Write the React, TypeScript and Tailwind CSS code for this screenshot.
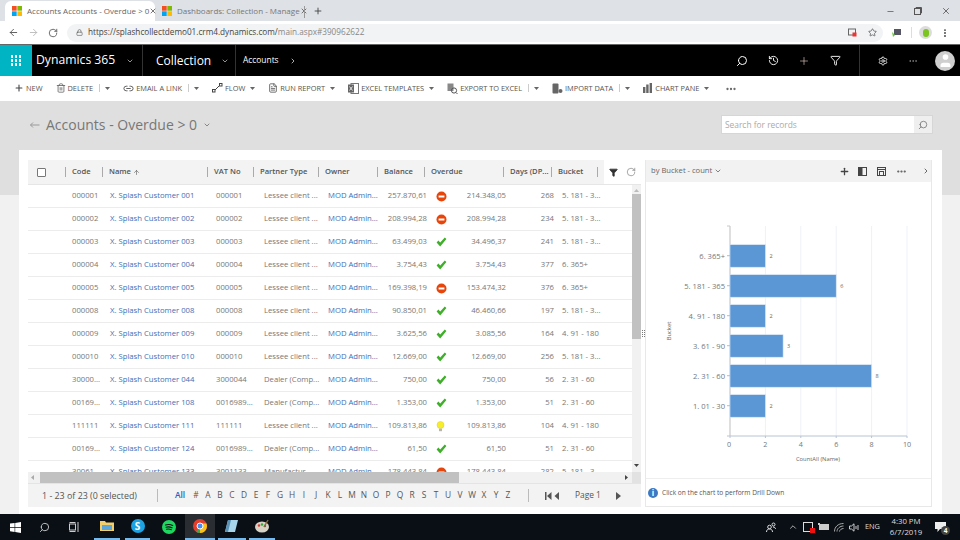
import React from 'react';
import {
  ArrowLeft, ArrowRight, RotateCw, Lock, Star, X, Plus, Minus, MoreVertical, ChevronDown, ChevronRight,
  Search, History, Filter, Settings, Trash2, Link2, FileText, MoreHorizontal, ArrowUp, User,
} from 'lucide-react';

const FONT = "font-['Open_Sans','Liberation_Sans',sans-serif]";

const MsLogo = () => (
  <svg width="10" height="10" viewBox="0 0 12 12" className="shrink-0">
    <rect x="0" y="0" width="5.6" height="5.6" fill="#f25022" />
    <rect x="6.4" y="0" width="5.6" height="5.6" fill="#7fba00" />
    <rect x="0" y="6.4" width="5.6" height="5.6" fill="#00a4ef" />
    <rect x="6.4" y="6.4" width="5.6" height="5.6" fill="#ffb900" />
  </svg>
);

const Caret = () => (
  <svg width="5" height="3" viewBox="0 0 5 3" className="ml-[5px]"><path d="M0 0h5L2.5 3z" fill="#666" /></svg>
);

const Sep = () => <span className="ml-[6px] h-[8px] w-px bg-[#ccc]" />;

const StopIcon = () => (
  <svg width="11" height="11" viewBox="0 0 11 11">
    <circle cx="5.5" cy="5.5" r="5" fill="#e8450a" />
    <rect x="2.6" y="4.5" width="5.8" height="2" fill="#fff" />
  </svg>
);
const CheckIcon = () => (
  <svg width="11" height="10" viewBox="0 0 11 10">
    <path d="M0.6 5.4 2.4 3.6 4.2 5.6 8.8 0.6 10.4 2 4.2 9.4z" fill="#3fae29" />
  </svg>
);
const BulbIcon = () => (
  <svg width="9" height="11" viewBox="0 0 9 11">
    <circle cx="4.5" cy="4" r="3.5" fill="#f7ee2a" stroke="#e0c830" strokeWidth="0.5" />
    <rect x="3" y="7.6" width="3" height="2.6" fill="#b5b5b5" />
  </svg>
);

type Row = [string, string, string, string, string, 'stop' | 'check' | 'bulb', string, string, string];

const rows: Row[] = [
  ['000001', '001', '000001', 'Lessee client ...', '257.870,61', 'stop', '214.348,05', '268', '5. 181 - 3...'],
  ['000002', '002', '000002', 'Lessee client ...', '208.994,28', 'stop', '208.994,28', '234', '5. 181 - 3...'],
  ['000003', '003', '000003', 'Lessee client ...', '63.499,03', 'check', '34.496,37', '241', '5. 181 - 3...'],
  ['000004', '004', '000004', 'Lessee client ...', '3.754,43', 'check', '3.754,43', '377', '6. 365+'],
  ['000005', '005', '000005', 'Lessee client ...', '169.398,19', 'stop', '153.474,32', '376', '6. 365+'],
  ['000008', '008', '000008', 'Lessee client ...', '90.850,01', 'check', '46.460,66', '197', '5. 181 - 3...'],
  ['000009', '009', '000009', 'Lessee client ...', '3.625,56', 'check', '3.085,56', '164', '4. 91 - 180'],
  ['000010', '010', '000010', 'Lessee client ...', '12.669,00', 'check', '12.669,00', '256', '5. 181 - 3...'],
  ['30000...', '044', '3000044', 'Dealer (Comp...', '750,00', 'check', '750,00', '56', '2. 31 - 60'],
  ['00169...', '108', '0016989...', 'Dealer (Comp...', '1.353,00', 'check', '1.353,00', '51', '2. 31 - 60'],
  ['111111', '111', '111111', 'Lessee client ...', '109.813,86', 'bulb', '109.813,86', '104', '4. 91 - 180'],
  ['00169...', '124', '0016989...', 'Dealer (Comp...', '61,50', 'check', '61,50', '51', '2. 31 - 60'],
  ['30061...', '133', '3001133', 'Manufactur...', '178.443,84', 'stop', '178.443,84', '282', '5. 181 - 3...'],
];

const headCols = 'grid grid-cols-[37px_37px_105px_46px_65px_59px_47px_79px_48px_46px_1fr] items-center';
const rowCols = 'grid grid-cols-[37px_37px_105px_46px_65px_59px_50px_20px_59px_48px_1fr] items-center';

const headers = ['Code', 'Name', 'VAT No', 'Partner Type', 'Owner', 'Balance', 'Overdue', 'Days (DP...', 'Bucket'];

const menu: { icon: React.ReactNode; label: string; after?: 'split' | 'caret' }[] = [
  { icon: <Plus size={10} strokeWidth={2.6} className="text-[#444]" />, label: 'NEW' },
  { icon: <Trash2 size={10} className="text-[#666]" />, label: 'DELETE', after: 'split' },
  { icon: <Link2 size={11} className="text-[#555]" />, label: 'EMAIL A LINK', after: 'split' },
  {
    icon: (
      <svg width="11" height="10" viewBox="0 0 11 10" fill="none" stroke="#444">
        <rect x="0.5" y="6.5" width="2.5" height="2.5" /><rect x="7.5" y="0.5" width="2.5" height="2.5" /><path d="M3 7 7.5 2.5" />
      </svg>
    ),
    label: 'FLOW',
    after: 'caret',
  },
  { icon: <FileText size={10} className="text-[#555]" />, label: 'RUN REPORT', after: 'caret' },
  {
    icon: (
      <svg width="11" height="11" viewBox="0 0 11 11">
        <rect x="3" y="0.5" width="7.5" height="10" fill="none" stroke="#777" />
        <rect x="0" y="1.5" width="6" height="8" fill="#666" />
        <path d="M1.5 3.5 4.5 7.5M4.5 3.5 1.5 7.5" stroke="#fff" strokeWidth="0.8" />
      </svg>
    ),
    label: 'EXCEL TEMPLATES',
    after: 'caret',
  },
  {
    icon: (
      <svg width="11" height="11" viewBox="0 0 11 11">
        <rect x="0.5" y="0.5" width="6" height="7.5" fill="#888" />
        <circle cx="7" cy="7.5" r="2.6" fill="none" stroke="#555" /><path d="M9 9.5 10.5 11" stroke="#555" />
      </svg>
    ),
    label: 'EXPORT TO EXCEL',
    after: 'split',
  },
  {
    icon: (
      <svg width="11" height="11" viewBox="0 0 11 11">
        <rect x="0.5" y="0.5" width="6" height="10" rx="1" fill="#666" />
        <circle cx="8.5" cy="8" r="2" fill="#666" />
      </svg>
    ),
    label: 'IMPORT DATA',
    after: 'split',
  },
  {
    icon: (
      <svg width="10" height="10" viewBox="0 0 10 10" fill="#666">
        <rect x="0" y="4" width="2.4" height="6" /><rect x="3.2" y="1.5" width="2.4" height="8.5" /><rect x="6.6" y="0" width="2.4" height="10" />
      </svg>
    ),
    label: 'CHART PANE',
    after: 'caret',
  },
];

const bars: [string, number][] = [
  ['6. 365+', 2],
  ['5. 181 - 365', 6],
  ['4. 91 - 180', 2],
  ['3. 61 - 90', 3],
  ['2. 31 - 60', 8],
  ['1. 01 - 30', 2],
];

// x/y numbers are relative to the chart pane svg (origin at page 646,183)
const Chart = () => {
  const x0 = 84;
  const unit = 17.7;
  const axisY = 254;
  return (
    <svg width="285" height="296" viewBox="0 0 285 296" className={FONT}>
      {[2, 4, 6, 8, 10].map((v) => (
        <line key={v} x1={x0 + v * unit} x2={x0 + v * unit} y1={44} y2={axisY} stroke="#eef1f6" />
      ))}
      <line x1={x0} x2={x0} y1={44} y2={axisY} stroke="#c9c9c9" strokeWidth="1.2" />
      <line x1={x0 - 3} x2={x0} y1={44} y2={44} stroke="#c9c9c9" />
      <line x1={x0 - 3} x2={x0 + 177} y1={axisY} y2={axisY} stroke="#b8c4d4" />
      {bars.map(([label, v], i) => {
        const y = 62.7 + i * 30;
        return (
          <g key={label}>
            <rect x={x0} y={y} width={v * unit} height={22.5} fill="#5b96d5" stroke="#dbe7f4" strokeWidth="0.6" />
            <line x1={x0 - 3} x2={x0} y1={y + 11} y2={y + 11} stroke="#bbb" />
            <text x={x0 - 5} y={y + 14} textAnchor="end" fontSize="7.6" fill="#777">{label}</text>
            <text x={x0 + v * unit + 4} y={y + 13.5} fontSize="5.5" fill="#666">{v}</text>
          </g>
        );
      })}
      {[0, 2, 4, 6, 8, 10].map((v) => (
        <g key={v}>
          <line x1={x0 + v * unit} x2={x0 + v * unit} y1={axisY} y2={axisY + 2} stroke="#b8c4d4" />
          <text x={x0 + v * unit - (v === 0 ? 1 : 0)} y={axisY + 11} textAnchor="middle" fontSize="7.2" fill="#777">{v}</text>
        </g>
      ))}
      <text x={x0 + 88} y={axisY + 25} textAnchor="middle" fontSize="5.8" fill="#666">CountAll (Name)</text>
      <text transform="rotate(-90 25 149)" x={25} y={149} textAnchor="middle" fontSize="5.8" fill="#666">Bucket</text>
    </svg>
  );
};

const StatusIcon = ({ kind }: { kind: Row[5] }) => {
  if (kind === 'stop') return <StopIcon />;
  if (kind === 'bulb') return <BulbIcon />;
  return <CheckIcon />;
};

export default function App() {
  return (
    <div className={`flex h-[540px] w-[960px] flex-col overflow-hidden bg-white ${FONT}`}>
      {/* browser tabs */}
      <div className="flex h-[21px] shrink-0 items-end bg-[#dee1e6] pl-[5px]">
        <div className="flex h-[20px] w-[150px] items-center rounded-t-[6px] bg-white pl-[7px] pr-[7px]">
          <MsLogo />
          <span className="ml-[5px] flex-1 whitespace-nowrap text-[8px] text-[#666]">Accounts Accounts - Overdue &gt; 0</span>
          <X size={8} strokeWidth={2.4} className="shrink-0 text-[#555]" />
        </div>
        <div className="flex h-[20px] w-[149px] items-center pl-[7px] pr-[6px]">
          <MsLogo />
          <span className="ml-[5px] flex-1 whitespace-nowrap text-[8px] text-[#777]">Dashboards: Collection - Manage</span>
          <X size={8} strokeWidth={2.4} className="shrink-0 text-[#555]" />
        </div>
        <span className="mb-[3px] h-[12px] w-px bg-[#999]" />
        <Plus size={10} strokeWidth={2.2} className="mb-[5px] ml-[8px] text-[#444]" />
        <div className="mb-[5px] ml-auto flex items-center gap-[19px] pr-[9px] text-[#555]">
          <Minus size={9} />
          <svg width="8" height="8" viewBox="0 0 8 8" fill="none" stroke="#555"><rect x="0.5" y="1.5" width="6" height="6" /><path d="M2 1.5V.5h5.5V6h-1" /></svg>
          <X size={10} />
        </div>
      </div>

      {/* address bar */}
      <div className="flex h-[23px] shrink-0 items-center bg-white pl-[8px]">
        <ArrowLeft size={11} className="text-[#555]" />
        <ArrowRight size={11} className="ml-[9px] text-[#bbb]" />
        <RotateCw size={10} className="ml-[9px] text-[#555]" />
        <div className="ml-[9px] flex h-[18px] w-[816px] items-center rounded-full bg-[#f1f3f4] pl-[9px] pr-[6px]">
          <Lock size={7} className="text-[#555]" />
          <span className="ml-[5px] flex-1 text-[8.2px] text-[#444]">
            https://splashcollectdemo01.crm4.dynamics.com/<span className="text-[#888]">main.aspx#390962622</span>
          </span>
          <svg width="9" height="9" viewBox="0 0 9 9"><rect x="0.5" y="1" width="7" height="6" fill="none" stroke="#666" /><rect x="4.5" y="4.5" width="4" height="4" fill="#e33" /></svg>
          <Star size={9} className="ml-[11px] text-[#555]" />
        </div>
        <svg width="10" height="10" viewBox="0 0 10 10" className="ml-[9px]"><rect x="2" y="1" width="7" height="6" fill="#556" /><path d="M0 4 3 7 1 9z" fill="#6c3" /></svg>
        <span className="ml-[9px] h-[11px] w-px bg-[#ddd]" />
        <span className="ml-[7px] flex h-[13px] w-[13px] items-center justify-center rounded-full bg-[#dcdcdc]">
          <span className="h-[8px] w-[6px] rounded-full bg-[#7cc520]" />
        </span>
        <MoreVertical size={10} strokeWidth={2.6} className="ml-[8px] text-[#444]" />
      </div>

      {/* dynamics nav */}
      <div className="flex h-[32px] shrink-0 items-center border-t border-t-[#666] bg-black text-white">
        <div className="flex h-full w-[32px] items-center justify-center bg-[#00b4c4]">
          <div className="grid grid-cols-3 gap-[1.4px]">
            {Array.from({ length: 9 }).map((_, i) => (
              <span key={i} className="h-[2.6px] w-[2.6px] bg-white" />
            ))}
          </div>
        </div>
        <div className="flex h-full w-[111px] items-center border-r border-r-[#333] pl-[4px]">
          <span className="text-[12.2px]">Dynamics 365</span>
          <ChevronDown size={8} className="ml-[11px] text-[#ddd]" />
        </div>
        <div className="flex h-full w-[93px] items-center border-r border-r-[#333] pl-[13px]">
          <span className="text-[12px]">Collection</span>
          <ChevronDown size={8} className="ml-[10px] text-[#ddd]" />
        </div>
        <span className="ml-[7px] text-[8.4px]">Accounts</span>
        <ChevronRight size={8} className="ml-[10px]" />
        <div className="ml-auto flex h-full items-center">
          <Search size={12} className="-scale-x-100" />
          <History size={11} className="ml-[20px]" />
          <Plus size={12} strokeWidth={1.2} className="ml-[19px] text-[#f3d9d0]" />
          <Filter size={11} className="ml-[20px]" />
          <div className="ml-[18px] flex h-full items-center border-l border-l-[#333] pl-[18px]">
            <Settings size={10} />
            <MoreHorizontal size={10} strokeWidth={1.4} className="ml-[20px] text-[#aaa]" />
            <span className="ml-[17px] mr-[5px] flex h-[20px] w-[20px] items-center justify-center overflow-hidden rounded-full bg-[#cfcfcf]">
              <User size={17} fill="#fff" strokeWidth={0} className="text-white" />
            </span>
          </div>
        </div>
      </div>

      {/* command bar */}
      <div className="flex h-[25px] shrink-0 items-center bg-white pl-[14px] text-[7.4px] text-[#555]">
        {menu.map((m) => (
          <div key={m.label} className="mr-[13px] flex items-center">
            {m.icon}
            <span className="ml-[2px]">{m.label}</span>
            {m.after === 'split' && <Sep />}
            {m.after && <Caret />}
          </div>
        ))}
        <MoreHorizontal size={12} strokeWidth={2.6} className="ml-[3px] text-[#666]" />
      </div>

      {/* page title */}
      <div className="flex h-[49px] shrink-0 items-start bg-[#dfdfdf] pl-[30px] pr-[27px] pt-[14px]">
        <div className="flex items-center text-[#777]">
          <svg width="10" height="8" viewBox="0 0 10 8" fill="none" stroke="#999"><path d="M0.5 4h9M3 1.5 0.5 4 3 6.5" /></svg>
          <span className="ml-[6px] text-[14px] leading-[20px]">Accounts - Overdue &gt; 0</span>
          <ChevronDown size={8} strokeWidth={2.6} className="ml-[6px]" />
        </div>
        <div className="ml-auto flex h-[19px] w-[212px] border border-[#d6d6d6] bg-white">
          <span className="flex-1 pl-[3px] text-[8.4px] leading-[17px] text-[#aaa]">Search for records</span>
          <span className="flex w-[18px] items-center justify-center bg-[#efefef]">
            <Search size={10} className="-scale-x-100 text-[#777]" />
          </span>
        </div>
      </div>

      <div className="flex min-h-0 flex-1 bg-[#f1f1f1]">
        <div className="w-[19px] shrink-0"><div className="h-[45px] bg-[#dfdfdf]" /></div>
        <div className="flex w-[923px] shrink-0 bg-white pl-[9px] pt-[10px]">
          {/* grid */}
          <div className="flex h-[347px] w-[613px] shrink-0 flex-col">
            <div className={`${headCols} h-[25px] shrink-0 border-b border-b-[#e6e6e6] bg-[#f3f3f3] text-[7.6px] font-semibold text-[#555]`}>
              <span className="flex items-center pl-[9px]">
                <span className="h-[9px] w-[9px] rounded-[1px] border border-[#777] bg-white" />
              </span>
              {headers.map((h) => (
                <span key={h} className="flex h-[10px] items-center whitespace-nowrap border-l border-l-[#aaa] pl-[6px]">
                  {h}
                  {h === 'Name' && <ArrowUp size={7} className="ml-[2px]" />}
                </span>
              ))}
              <span className="flex h-full items-center pl-[7px]">
                <span className="absolute ml-[-7px] h-[10px] w-px bg-[#aaa]" />
                <span className="flex h-full flex-1 items-center justify-center gap-[8px] bg-white">
                  <Filter size={9} fill="#333" className="text-[#333]" />
                  <RotateCw size={10} strokeWidth={1.2} className="text-[#555]" />
                </span>
              </span>
            </div>
            <div className="flex min-h-0 flex-1">
              <div className="min-w-0 flex-1 overflow-hidden">
                {rows.map((r) => (
                  <div key={r[1]} className={`${rowCols} h-[23px] border-b border-b-[#ececec] text-[7.7px] text-[#777]`}>
                    <span />
                    <span className="pl-[7px]">{r[0]}</span>
                    <span className="whitespace-nowrap pl-[8px] text-[#3f6eb5]">X. Splash Customer {r[1]}</span>
                    <span className="whitespace-nowrap pl-[9px]">{r[2]}</span>
                    <span className="whitespace-nowrap pl-[11px]">{r[3]}</span>
                    <span className="whitespace-nowrap pl-[10px] text-[#3f6eb5]">MOD Admin...</span>
                    <span className="whitespace-nowrap text-right">{r[4]}</span>
                    <span className="flex pl-[9px]"><StatusIcon kind={r[5]} /></span>
                    <span className="whitespace-nowrap text-right">{r[6]}</span>
                    <span className="text-right">{r[7]}</span>
                    <span className="whitespace-nowrap pl-[8px]">{r[8]}</span>
                  </div>
                ))}
              </div>
              <div className="flex w-[9px] shrink-0 flex-col items-center bg-[#f1f1f1]">
                <svg width="5" height="3" viewBox="0 0 5 3" className="mt-[4px]"><path d="M0 3h5L2.5 0z" fill="#bbb" /></svg>
                <span className="mt-[2px] h-[145px] w-full bg-[#c1c1c1]" />
                <svg width="5" height="3" viewBox="0 0 5 3" className="mb-[5px] mt-auto"><path d="M0 0h5L2.5 3z" fill="#444" /></svg>
              </div>
            </div>
            {/* horizontal scroll */}
            <div className="flex h-[11px] shrink-0 items-center bg-[#f1f1f1]">
              <svg width="3" height="5" viewBox="0 0 3 5" className="ml-[3px] mr-[6px]"><path d="M3 0v5L0 2.5z" fill="#aaa" /></svg>
              <span className="h-full w-[419px] bg-[#c1c1c1]" />
              <svg width="3" height="5" viewBox="0 0 3 5" className="ml-auto mr-[4px]"><path d="M0 0v5L3 2.5z" fill="#444" /></svg>
              <span className="h-full w-[9px] bg-[#e2e2e2]" />
            </div>
            {/* pager */}
            <div className="flex h-[24px] shrink-0 items-center border-t border-t-[#e4e4e4] bg-[#f3f3f3] text-[8.9px] text-[#555]">
              <span className="w-[129px] whitespace-nowrap pl-[14px] font-medium">1 - 23 of 23 (0 selected)</span>
              <span className="h-[13px] w-px bg-[#bbb]" />
              <div className="ml-[17px] flex items-center text-[8.4px] font-medium">
                <span className="w-[15px] font-semibold text-[#2a62c0]">All</span>
                {'#ABCDEFGHIJKLMNOPQRSTUVWXYZ'.split('').map((c) => (
                  <span key={c} className="w-[12px] text-center">{c}</span>
                ))}
              </div>
              <span className="ml-[14px] h-[13px] w-px bg-[#bbb]" />
              <svg width="15" height="8" viewBox="0 0 15 8" fill="#555" className="ml-[16px]"><rect x="0" y="0" width="1.5" height="8" /><path d="M6.5 0v8L2 4zM14 0v8L9.5 4z" /></svg>
              <span className="ml-[15px] text-[8.4px] font-medium">Page 1</span>
              <svg width="5" height="8" viewBox="0 0 5 8" fill="#555" className="ml-[15px]"><path d="M0 0v8L5 4z" /></svg>
            </div>
          </div>

          {/* splitter */}
          <div className="flex h-[347px] w-[4px] shrink-0 items-center justify-center">
            <span className="grid grid-cols-2 gap-[1px]">
              {Array.from({ length: 8 }).map((_, i) => (
                <span key={i} className="h-px w-px bg-[#777]" />
              ))}
            </span>
          </div>

          {/* chart pane */}
          <div className="flex h-[347px] w-[287px] shrink-0 flex-col border-x border-b border-x-[#e8e8e8] border-b-[#e8e8e8]">
            <div className="flex h-[22px] shrink-0 items-center bg-[#f2f2f2] pl-[5px] pr-[1px] text-[7.6px] text-[#666]">
              <span>by Bucket - count</span>
              <ChevronDown size={8} strokeWidth={2.4} className="ml-[2px]" />
              <Plus size={11} strokeWidth={2.8} className="ml-auto text-[#444]" />
              <svg width="9" height="9" viewBox="0 0 9 9" className="ml-[8px]"><rect x="0.5" y="0.5" width="8" height="8" fill="none" stroke="#444" /><rect x="0.5" y="0.5" width="4" height="8" fill="#444" /></svg>
              <svg width="9" height="9" viewBox="0 0 9 9" fill="none" stroke="#444" className="ml-[10px]"><rect x="0.5" y="0.5" width="8" height="8" /><rect x="2.5" y="4.5" width="4" height="4" /><path d="M0.5 2.5h8" /></svg>
              <MoreHorizontal size={11} strokeWidth={2.8} className="ml-[10px] text-[#555]" />
              <ChevronRight size={8} strokeWidth={2.6} className="ml-[15px] text-[#555]" />
            </div>
            <div className="h-[296px] shrink-0"><Chart /></div>
            <div className="flex min-h-0 flex-1 items-center border-t border-t-[#eee] pl-[2px] text-[6.6px] text-[#555]">
              <span className="flex h-[10px] w-[10px] items-center justify-center rounded-full bg-[#3b79c3] text-[8px] font-bold leading-none text-white">i</span>
              <span className="ml-[4px]">Click on the chart to perform Drill Down</span>
            </div>
          </div>
        </div>
        <div className="flex-1"><div className="h-[45px] bg-[#dfdfdf]" /></div>
      </div>

      {/* taskbar */}
      <div className="flex h-[26px] shrink-0 items-center bg-[#0a0f16] text-white">
        <div className="flex w-[30px] justify-center">
          <svg width="11" height="11" viewBox="0 0 11 11" fill="#fff"><path d="M0 1.6 4.6 1v4.1H0zM5.2.9 11 0v5.1H5.2zM0 5.7h4.6v4.2L0 9.3zM5.2 5.7H11V11l-5.8-.9z" /></svg>
        </div>
        <Search size={11} className="ml-[9px] -scale-x-100 text-[#ccc]" />
        <svg width="11" height="10" viewBox="0 0 11 10" fill="none" stroke="#ccc" className="ml-[19px]"><rect x="0.5" y="2" width="6" height="6" /><path d="M0.5 0.5h6M0.5 9.5h6M9 0v10" /></svg>
        <div className="ml-[14px] flex h-full w-[26px] items-center justify-center border-b-2 border-b-[#76b9ed]">
          <svg width="14" height="12" viewBox="0 0 14 12"><path d="M0 1h5l1 1.5h8V11H0z" fill="#f2cf6b" /><rect x="2" y="5" width="10" height="5" fill="#5aa7dd" /></svg>
        </div>
        <div className="ml-[5px] flex h-full w-[25px] items-center justify-center border-b-2 border-b-[#76b9ed]">
          <span className="flex h-[14px] w-[14px] items-center justify-center rounded-full bg-[#1ba3e3] text-[10px] font-bold leading-none">S</span>
        </div>
        <div className="ml-[6px] flex h-full w-[25px] items-center justify-center">
          <svg width="14" height="14" viewBox="0 0 14 14" fill="none"><circle cx="7" cy="7" r="7" fill="#1ed760" /><path d="M3.5 5c2.5-.8 5-.6 7.2.5M4 7.2c2-.6 4.2-.4 6 .6M4.5 9.2c1.6-.4 3.3-.3 4.8.5" stroke="#111" strokeWidth="1.1" strokeLinecap="round" /></svg>
        </div>
        <div className="ml-[4px] flex h-full w-[30px] items-center justify-center border-b-2 border-b-[#76b9ed] bg-[#2a2e33]">
          <svg width="14" height="14" viewBox="0 0 14 14"><circle cx="7" cy="7" r="7" fill="#e33e2b" /><path d="M7 7 13 10.5A7 7 0 0 1 3 12.7z" fill="#3aa757" /><path d="M7 7V14A7 7 0 0 0 13.5 4.5H7z" fill="#fbc116" /><circle cx="7" cy="7" r="3" fill="#4a8df0" stroke="#fff" /></svg>
        </div>
        <div className="ml-[3px] flex h-full w-[28px] items-center justify-center border-b-2 border-b-[#76b9ed]">
          <svg width="14" height="14" viewBox="0 0 14 14"><path d="M3 1h10L10 13H0z" fill="#a8d5ea" /><path d="M3 1h3L3 13H0z" fill="#5a93b5" /></svg>
        </div>
        <div className="ml-[3px] flex h-full w-[26px] items-center justify-center border-b-2 border-b-[#76b9ed]">
          <svg width="14" height="14" viewBox="0 0 14 14"><ellipse cx="7" cy="8" rx="7" ry="5.5" fill="#d8d2c4" /><circle cx="4" cy="6.5" r="1.2" fill="#e33" /><circle cx="7" cy="5.5" r="1.2" fill="#3a3" /><circle cx="10" cy="7" r="1.2" fill="#36c" /><path d="M9 8 13 1" stroke="#8a6a3a" strokeWidth="1.4" /></svg>
        </div>

        <div className="ml-auto flex items-center">
          <svg width="10" height="11" viewBox="0 0 10 11" fill="none" stroke="#ddd"><circle cx="3.5" cy="5" r="1.8" /><circle cx="7.5" cy="2.5" r="1.5" /><path d="M.5 10c0-2 1.2-3 3-3s3 1 3 3M7 5c1.5 0 2.5.8 2.5 2" /></svg>
          <ChevronDown size={10} className="ml-[12px] rotate-180 text-[#ccc]" />
          <span className="relative ml-[5px] flex">
            <svg width="10" height="10" viewBox="0 0 10 10" fill="none" stroke="#ddd"><rect x="0.5" y="0.5" width="9" height="9" /></svg>
            <span className="absolute -bottom-[1px] -right-[2px] h-[5px] w-[5px] bg-[#e11]" />
          </span>
          <svg width="11" height="8" viewBox="0 0 11 8" fill="#ccc" className="ml-[5px]"><rect x="1" y="1" width="10" height="6" /><rect x="0" y="0" width="2" height="2" /></svg>
          <svg width="10" height="9" viewBox="0 0 10 9" fill="none" stroke="#aaa" className="ml-[5px]"><path d="M0.5 8.5C.5 4 4 .5 9.5.5M3 8.5C3 5.5 6 3 9.5 3M5.5 8.5C5.5 7 7.5 5.5 9.5 5.5" /></svg>
          <svg width="10" height="9" viewBox="0 0 10 9" fill="none" stroke="#ccc" className="ml-[5px]"><path d="M0.5 3h2L5 .8v7.4L2.5 6h-2zM7 3v3M9 2v5" /></svg>
          <span className="ml-[6px] text-[7.4px] text-[#ddd]">ENG</span>
          <div className="ml-[5px] flex w-[42px] flex-col items-center text-[7.8px] leading-[11px] text-[#ddd]">
            <span>4:30 PM</span>
            <span>6/7/2019</span>
          </div>
          <span className="relative ml-[8px] mr-[14px] flex">
            <svg width="11" height="10" viewBox="0 0 11 10" fill="#eee"><path d="M0 0h11v7H5L2.5 10V7H0z" /></svg>
            <span className="absolute -bottom-[3px] -right-[4px] flex h-[9px] w-[9px] items-center justify-center rounded-full bg-[#444] text-[6.5px] font-bold">4</span>
          </span>
        </div>
      </div>
    </div>
  );
}
